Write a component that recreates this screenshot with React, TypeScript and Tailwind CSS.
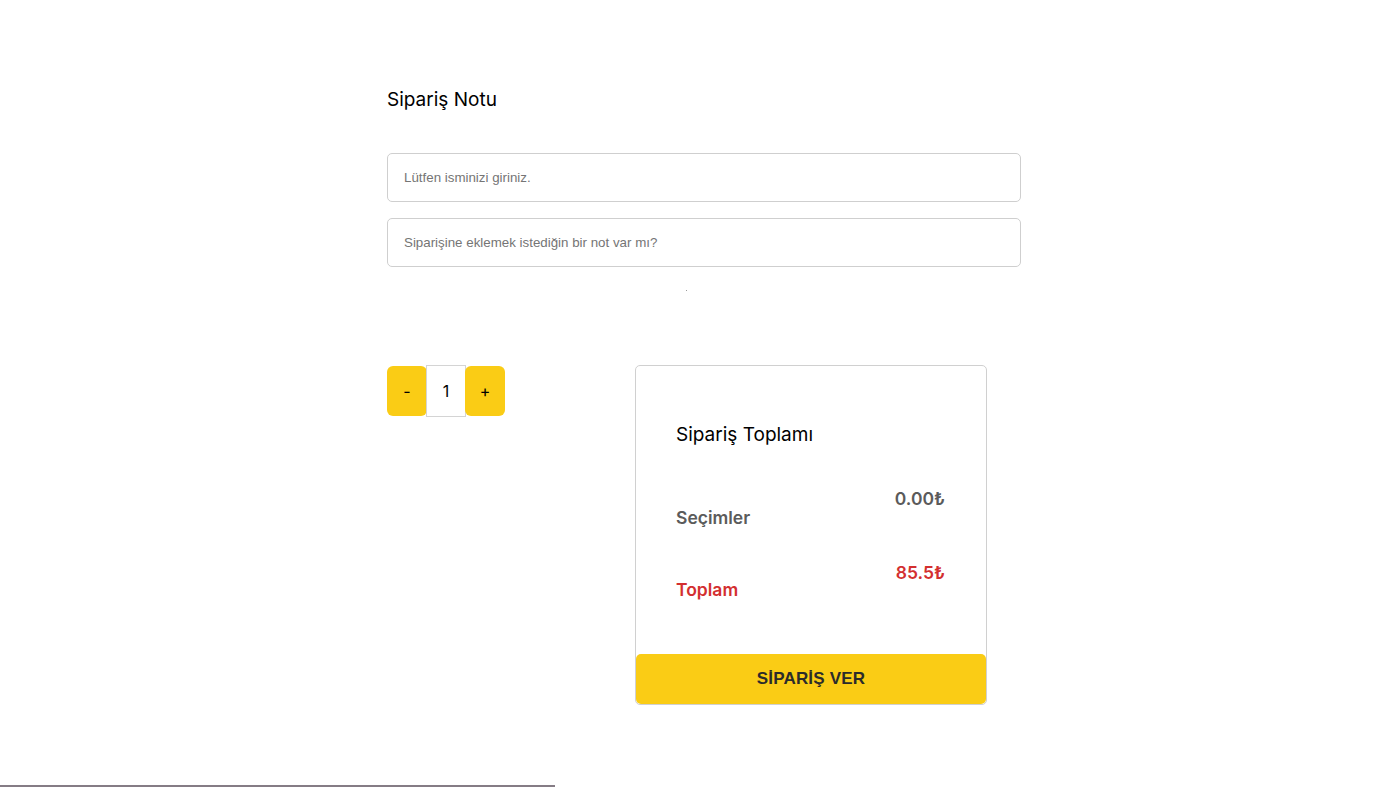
import React from "react";

const inter = { fontFamily: "Inter, 'Noto Sans', sans-serif" };

function QuantityPicker({ count }: { count: number }) {
  return (
    <div className="flex items-center" style={inter}>
      <button className="w-10 h-[50px] bg-[#facc15] rounded-md text-[16px] text-black">-</button>
      <div className="w-[40px] h-[52px] -mx-[1px] border border-[#d4d4d4] bg-white flex items-center justify-center text-[16px] text-black">
        {count}
      </div>
      <button className="w-10 h-[50px] bg-[#facc15] rounded-md text-[16px] text-black">+</button>
    </div>
  );
}

function OrderSummary() {
  return (
    <div className="w-[352px] h-[340px] border border-[#d0d0d0] rounded-[5px] flex flex-col" style={inter}>
      <h2 className="pl-10 pt-[57px] text-[19px] leading-6 text-black">Sipariş Toplamı</h2>
      <div className="flex justify-between items-start pl-10 pr-[41px] mt-[40px] text-[17.5px] font-semibold text-[#5b5b5b]">
        <span className="mt-[19px] leading-6">Seçimler</span>
        <span className="leading-6">0.00₺</span>
      </div>
      <div className="flex justify-between items-start pl-10 pr-[41px] mt-[31px] text-[17.5px] font-semibold text-[#d32f2f]">
        <span className="mt-[17px] leading-6">Toplam</span>
        <span className="leading-6">85.5₺</span>
      </div>
      <button
        className="mt-auto h-[50px] w-full bg-[#facc15] rounded-[5px] text-[17px] font-bold text-[#2b2b2b] tracking-[0.2px]"
        style={{ fontFamily: "'Liberation Sans', Arial, sans-serif" }}
      >
        SİPARİŞ VER
      </button>
    </div>
  );
}

export default function App() {
  return (
    <main className="min-h-[787px] flex flex-col bg-white">
      <div className="ml-[387px] w-[634px] pt-[88px]">
        <h1 className="text-[19px] leading-6 text-black" style={inter}>Sipariş Notu</h1>
        <div className="mt-[41px] flex flex-col gap-4" style={{ fontFamily: "'Liberation Sans', Arial, sans-serif" }}>
          <input
            className="h-[49px] w-full border border-[#cfcfcf] rounded-[5px] px-4 text-[13.333px] placeholder:text-[#757575] outline-none"
            placeholder="Lütfen isminizi giriniz."
          />
          <input
            className="h-[49px] w-full border border-[#cfcfcf] rounded-[5px] px-4 text-[13.333px] placeholder:text-[#757575] outline-none"
            placeholder="Siparişine eklemek istediğin bir not var mı?"
          />
        </div>
        <div className="ml-[299px] mt-[23px] w-px h-px bg-[#9a9a9a]" />
        <div className="mt-[74px] flex items-start gap-[130px]">
          <QuantityPicker count={1} />
          <OrderSummary />
        </div>
      </div>
      <div className="mt-auto w-[555px] h-[2px] bg-[#857c85]" />
    </main>
  );
}
